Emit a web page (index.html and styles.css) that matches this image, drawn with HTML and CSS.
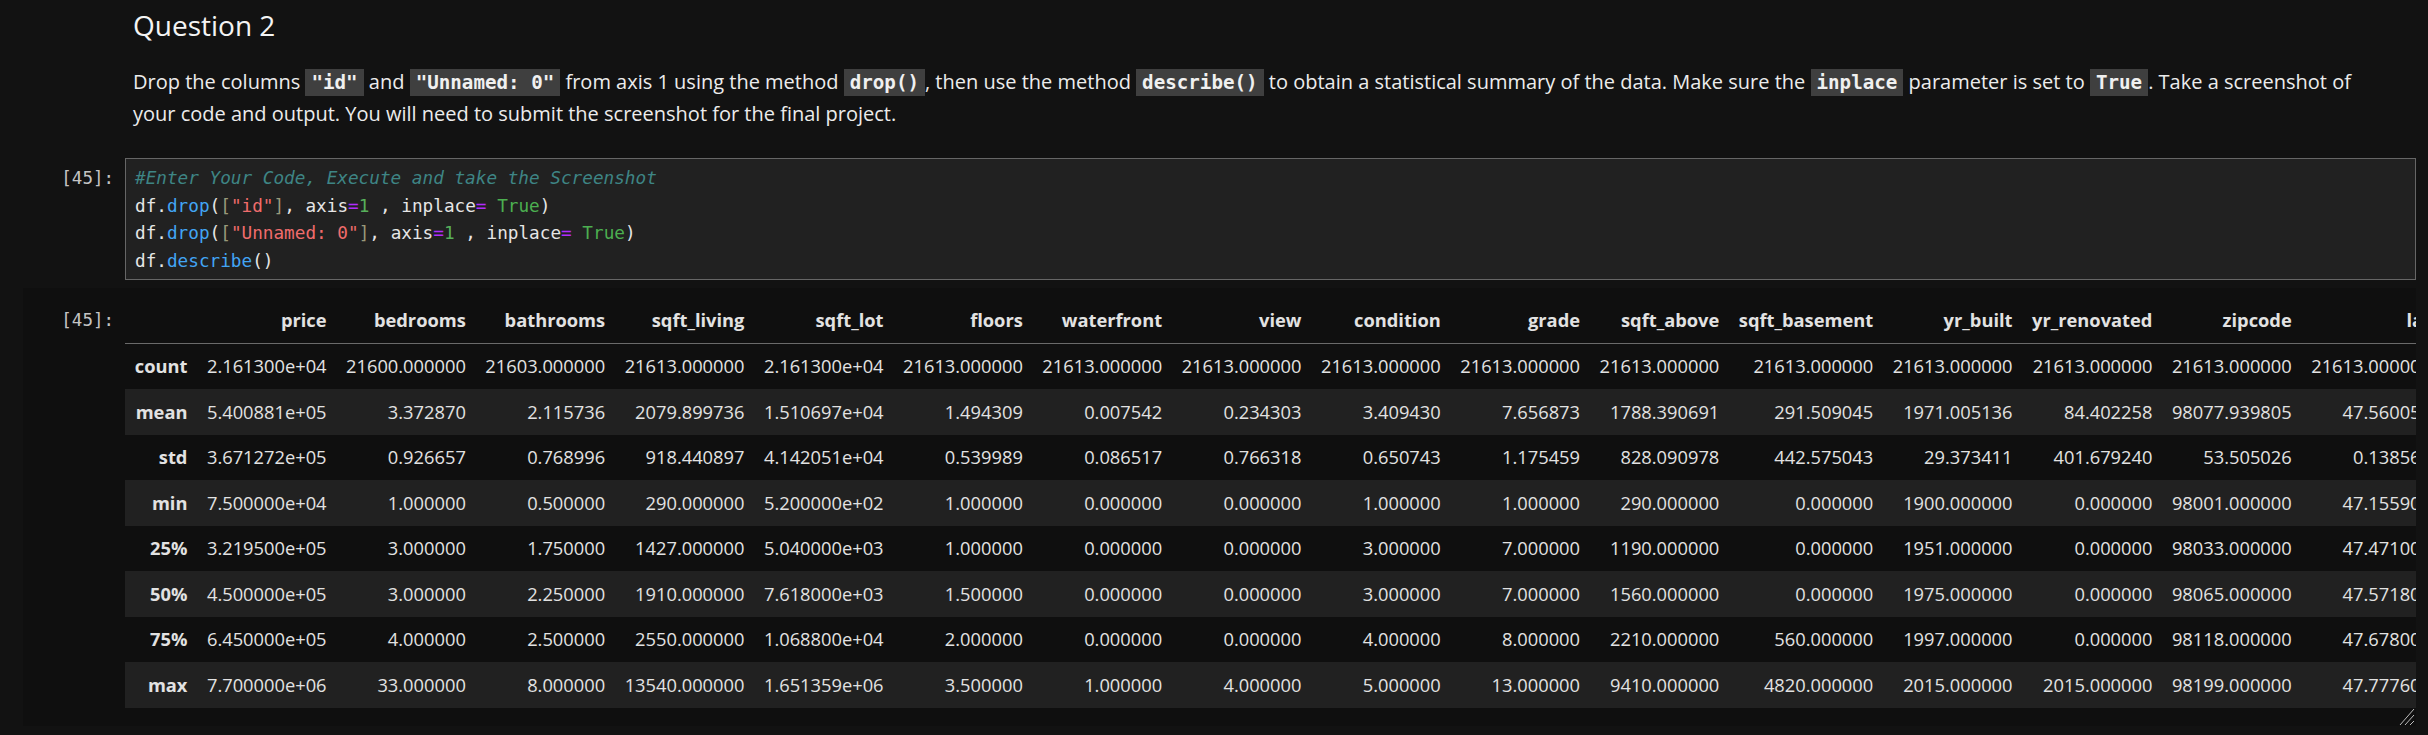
FILE: index.html
```html
<!DOCTYPE html>
<html lang="en">
<head>
<meta charset="utf-8">
<title>Question 2</title>
<link rel="stylesheet" href="styles.css">
</head>
<body>
<div class="notebook">
  <div class="cell md-cell">
    <div class="prompt"></div>
    <div class="md">
      <h2 class="md-title">Question 2</h2>
      <p class="md-text">Drop the columns <code>"id"</code> and <code>"Unnamed: 0"</code> from axis 1 using the method <code>drop()</code>, then use the method <code>describe()</code> to obtain a statistical summary of the data. Make sure the <code>inplace</code> parameter is set to <code>True</code>. Take a screenshot of your code and output. You will need to submit the screenshot for the final project.</p>
    </div>
  </div>

  <div class="cell code-cell">
    <div class="prompt in-prompt">[45]:</div>
    <div class="editor"><pre class="code"><span class="c-comment">#Enter Your Code, Execute and take the Screenshot</span>
df.<span class="c-prop">drop</span>(<span class="c-br">[</span><span class="c-str">"id"</span><span class="c-br">]</span>, axis<span class="c-op">=</span><span class="c-num">1</span> , inplace<span class="c-op">=</span> <span class="c-kw">True</span>)
df.<span class="c-prop">drop</span>(<span class="c-br">[</span><span class="c-str">"Unnamed: 0"</span><span class="c-br">]</span>, axis<span class="c-op">=</span><span class="c-num">1</span> , inplace<span class="c-op">=</span> <span class="c-kw">True</span>)
df.<span class="c-prop">describe</span>()</pre></div>
  </div>

  <div class="output-area">
    <div class="prompt out-prompt">[45]:</div>
    <div class="output">
      <table class="df">
        <thead>
          <tr><th></th><th>price</th><th>bedrooms</th><th>bathrooms</th><th>sqft_living</th><th>sqft_lot</th><th>floors</th><th>waterfront</th><th>view</th><th>condition</th><th>grade</th><th>sqft_above</th><th>sqft_basement</th><th>yr_built</th><th>yr_renovated</th><th>zipcode</th><th>lat</th><th>long</th><th>sqft_living15</th><th>sqft_lot15</th></tr>
        </thead>
        <tbody>
          <tr><th>count</th><td>2.161300e+04</td><td>21600.000000</td><td>21603.000000</td><td>21613.000000</td><td>2.161300e+04</td><td>21613.000000</td><td>21613.000000</td><td>21613.000000</td><td>21613.000000</td><td>21613.000000</td><td>21613.000000</td><td>21613.000000</td><td>21613.000000</td><td>21613.000000</td><td>21613.000000</td><td>21613.000000</td><td>21613.000000</td><td>21613.000000</td><td>21613.000000</td></tr>
          <tr><th>mean</th><td>5.400881e+05</td><td>3.372870</td><td>2.115736</td><td>2079.899736</td><td>1.510697e+04</td><td>1.494309</td><td>0.007542</td><td>0.234303</td><td>3.409430</td><td>7.656873</td><td>1788.390691</td><td>291.509045</td><td>1971.005136</td><td>84.402258</td><td>98077.939805</td><td>47.560053</td><td>-122.213896</td><td>1986.552492</td><td>12768.455652</td></tr>
          <tr><th>std</th><td>3.671272e+05</td><td>0.926657</td><td>0.768996</td><td>918.440897</td><td>4.142051e+04</td><td>0.539989</td><td>0.086517</td><td>0.766318</td><td>0.650743</td><td>1.175459</td><td>828.090978</td><td>442.575043</td><td>29.373411</td><td>401.679240</td><td>53.505026</td><td>0.138564</td><td>0.140828</td><td>685.391304</td><td>27304.179631</td></tr>
          <tr><th>min</th><td>7.500000e+04</td><td>1.000000</td><td>0.500000</td><td>290.000000</td><td>5.200000e+02</td><td>1.000000</td><td>0.000000</td><td>0.000000</td><td>1.000000</td><td>1.000000</td><td>290.000000</td><td>0.000000</td><td>1900.000000</td><td>0.000000</td><td>98001.000000</td><td>47.155900</td><td>-122.519000</td><td>399.000000</td><td>651.000000</td></tr>
          <tr><th>25%</th><td>3.219500e+05</td><td>3.000000</td><td>1.750000</td><td>1427.000000</td><td>5.040000e+03</td><td>1.000000</td><td>0.000000</td><td>0.000000</td><td>3.000000</td><td>7.000000</td><td>1190.000000</td><td>0.000000</td><td>1951.000000</td><td>0.000000</td><td>98033.000000</td><td>47.471000</td><td>-122.328000</td><td>1490.000000</td><td>5100.000000</td></tr>
          <tr><th>50%</th><td>4.500000e+05</td><td>3.000000</td><td>2.250000</td><td>1910.000000</td><td>7.618000e+03</td><td>1.500000</td><td>0.000000</td><td>0.000000</td><td>3.000000</td><td>7.000000</td><td>1560.000000</td><td>0.000000</td><td>1975.000000</td><td>0.000000</td><td>98065.000000</td><td>47.571800</td><td>-122.230000</td><td>1840.000000</td><td>7620.000000</td></tr>
          <tr><th>75%</th><td>6.450000e+05</td><td>4.000000</td><td>2.500000</td><td>2550.000000</td><td>1.068800e+04</td><td>2.000000</td><td>0.000000</td><td>0.000000</td><td>4.000000</td><td>8.000000</td><td>2210.000000</td><td>560.000000</td><td>1997.000000</td><td>0.000000</td><td>98118.000000</td><td>47.678000</td><td>-122.125000</td><td>2360.000000</td><td>10083.000000</td></tr>
          <tr><th>max</th><td>7.700000e+06</td><td>33.000000</td><td>8.000000</td><td>13540.000000</td><td>1.651359e+06</td><td>3.500000</td><td>1.000000</td><td>4.000000</td><td>5.000000</td><td>13.000000</td><td>9410.000000</td><td>4820.000000</td><td>2015.000000</td><td>2015.000000</td><td>98199.000000</td><td>47.777600</td><td>-121.315000</td><td>6210.000000</td><td>871200.000000</td></tr>
        </tbody>
      </table>
    </div>
    <svg class="resize-handle" width="18" height="20" viewBox="0 0 18 20" aria-hidden="true">
      <line x1="2" y1="19" x2="16" y2="3" stroke="#bdbdbd" stroke-width="1"/>
      <line x1="7" y1="19" x2="16" y2="9" stroke="#bdbdbd" stroke-width="1"/>
      <line x1="12" y1="19" x2="16" y2="15" stroke="#bdbdbd" stroke-width="1"/>
    </svg>
  </div>
</div>
</body>
</html>
```

FILE: styles.css
```css
html, body {
  margin: 0;
  padding: 0;
  background: #121212;
}

body {
  font-family: "Open Sans", "Noto Sans", sans-serif;
  color: #ececec;
}

.notebook {
  padding: 0 12px 0 23px;
}

.cell {
  display: flex;
  align-items: flex-start;
}

.prompt {
  flex: none;
  width: 102px;
  box-sizing: border-box;
  padding-right: 11px;
  text-align: right;
  font-family: "DejaVu Sans Mono", "Liberation Mono", monospace;
  font-size: 17.5px;
  color: #c4c4c4;
}

/* markdown */
.md-cell {
  padding-top: 8px;
}

.md {
  flex: 1;
  min-width: 0;
  padding: 0 30px 0 8px;
}

.md-title {
  margin: 0;
  font-size: 28px;
  line-height: 34px;
  font-weight: 400;
  color: #f4f4f4;
}

.md-text {
  margin: 24px 0 0;
  font-size: 20px;
  line-height: 31px;
  color: #ececec;
}

.md-text code {
  font-family: "DejaVu Sans Mono", "Liberation Mono", monospace;
  font-size: 19.2px;
  font-weight: 700;
  background: #3f3f3f;
  color: #f0f0f0;
  padding: 2px 6px;
}

/* code cell */
.code-cell {
  margin-top: 29px;
}

.in-prompt {
  padding-top: 7px;
  line-height: 27.5px;
}

.editor {
  flex: 1;
  min-width: 0;
  background: #212121;
  border: 1px solid #666666;
  padding: 6px 9px 4px;
}

.code {
  margin: 0;
  font-family: "DejaVu Sans Mono", "Liberation Mono", monospace;
  font-size: 17.7px;
  line-height: 27.5px;
  color: #e6e6e6;
}

.c-comment { color: #3e8585; font-style: italic; }
.c-prop { color: #42a5f5; }
.c-br { color: #99997a; }
.c-str { color: #f06c6c; }
.c-op { color: #b22bff; }
.c-num { color: #57b05b; }
.c-kw { color: #4caf50; }

/* output */
.output-area {
  position: relative;
  display: flex;
  align-items: flex-start;
  margin-top: 8px;
  padding: 9px 0 18px;
  background: #0f0f0f;
}

.out-prompt {
  padding-top: 9.75px;
  line-height: 26px;
}

.output {
  flex: 1;
  min-width: 0;
  overflow: hidden;
}

.df {
  border-collapse: collapse;
  border-spacing: 0;
  font-family: "Open Sans", "Noto Sans", sans-serif;
  font-size: 18.3px;
  line-height: 26px;
  color: #e2e2e2;
}

.df th,
.df td {
  padding: 9.75px 9.75px;
  text-align: right;
  white-space: nowrap;
  vertical-align: middle;
}

.df th {
  font-weight: 700;
}

.df td {
  font-weight: 400;
}

.df thead th {
  border-bottom: 1px solid #6a6a6a;
}

.df tbody tr:nth-child(even) {
  background: #212121;
}

.resize-handle {
  position: absolute;
  right: 0;
  bottom: 0;
}
```
